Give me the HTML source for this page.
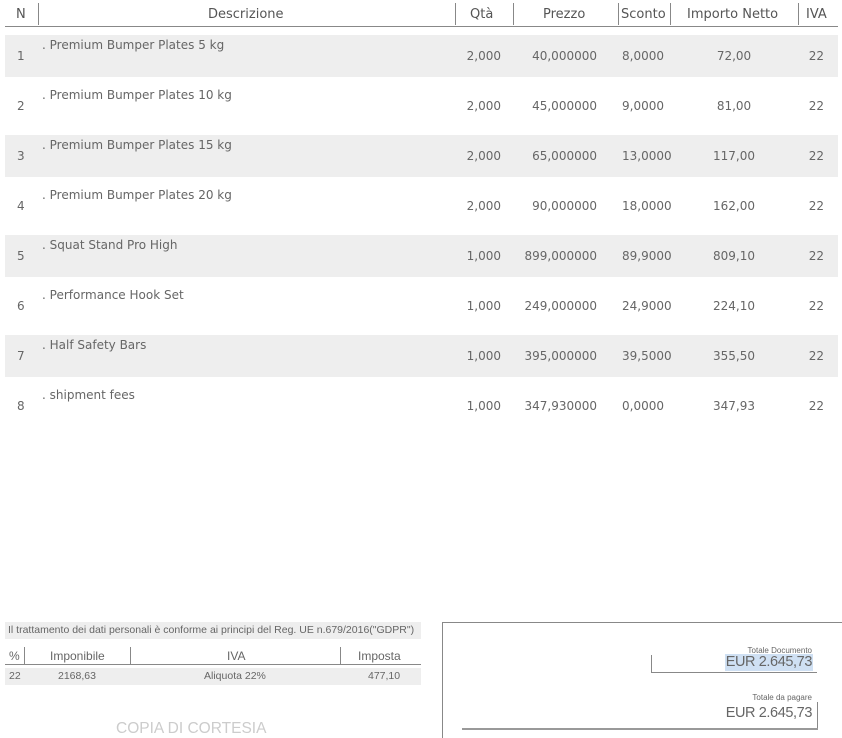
<!DOCTYPE html>
<html><head><meta charset="utf-8"><style>
body{margin:0;width:842px;height:738px;background:#fff;position:relative;overflow:hidden;font-family:"DejaVu Sans","Liberation Sans",sans-serif;color:#666;}
.a{position:absolute;white-space:nowrap}
.h{font-size:13px;top:7px;color:#555}
.v{position:absolute;width:1px;background:#888}
.row{position:absolute;left:5px;width:833px;height:42px}
.g{background:#eee}
.c{font-size:12px}
.cond{font-family:"Liberation Sans Narrow","Liberation Sans",sans-serif;}
</style></head><body>
<div class="a h" style="left:16px">N</div>
<div class="v" style="left:38px;top:3px;height:22px"></div>
<div class="a h" style="left:208px">Descrizione</div>
<div class="v" style="left:455px;top:3px;height:22px"></div>
<div class="a h" style="left:470px">Qtà</div>
<div class="v" style="left:513px;top:3px;height:22px"></div>
<div class="a h" style="left:543px">Prezzo</div>
<div class="v" style="left:618px;top:3px;height:22px"></div>
<div class="a h" style="left:621px">Sconto</div>
<div class="v" style="left:670px;top:3px;height:22px"></div>
<div class="a h" style="left:687px">Importo Netto</div>
<div class="v" style="left:798px;top:3px;height:22px"></div>
<div class="a h" style="left:806px">IVA</div>
<div style="position:absolute;left:5px;top:26px;width:833px;height:1px;background:#888"></div>

<div class="row g" style="top:35px"></div>
<div class="row g" style="top:135px"></div>
<div class="row g" style="top:235px"></div>
<div class="row g" style="top:335px"></div>

<div id="rows"></div>
<script>
var d=[["Premium Bumper Plates 5 kg","2,000","40,000000","8,0000","72,00"],
["Premium Bumper Plates 10 kg","2,000","45,000000","9,0000","81,00"],
["Premium Bumper Plates 15 kg","2,000","65,000000","13,0000","117,00"],
["Premium Bumper Plates 20 kg","2,000","90,000000","18,0000","162,00"],
["Squat Stand Pro High","1,000","899,000000","89,9000","809,10"],
["Performance Hook Set","1,000","249,000000","24,9000","224,10"],
["Half Safety Bars","1,000","395,000000","39,5000","355,50"],
["shipment fees","1,000","347,930000","0,0000","347,93"]];
var h="";
d.forEach(function(r,i){var t=35+50*i;
h+='<div class="a c" style="left:17px;top:'+(t+14)+'px">'+(i+1)+'</div>';
h+='<div class="a c" style="left:42px;top:'+(t+3)+'px">. '+r[0]+'</div>';
h+='<div class="a c" style="right:341px;top:'+(t+14)+'px">'+r[1]+'</div>';
h+='<div class="a c" style="right:245px;top:'+(t+14)+'px">'+r[2]+'</div>';
h+='<div class="a c" style="left:622px;top:'+(t+14)+'px">'+r[3]+'</div>';
h+='<div class="a c" style="left:684px;width:100px;text-align:center;top:'+(t+14)+'px">'+r[4]+'</div>';
h+='<div class="a c" style="right:18px;top:'+(t+14)+'px">22</div>';});
document.getElementById("rows").innerHTML=h;
</script>

<div style="position:absolute;left:5px;top:622px;width:416px;height:17px;background:#eee"></div>
<div class="a cond" style="left:8px;top:624px;font-size:10.5px">Il trattamento dei dati personali è conforme ai principi del Reg. UE n.679/2016("GDPR")</div>
<div class="a cond" style="left:9px;top:649px;font-size:12px">%</div>
<div class="v" style="left:24px;top:647px;height:17px"></div>
<div class="a cond" style="left:50px;top:649px;font-size:12px">Imponibile</div>
<div class="v" style="left:130px;top:647px;height:17px"></div>
<div class="a cond" style="left:227px;top:649px;font-size:12px">IVA</div>
<div class="v" style="left:340px;top:647px;height:17px"></div>
<div class="a cond" style="left:358px;top:649px;font-size:12px">Imposta</div>
<div style="position:absolute;left:5px;top:664px;width:416px;height:1px;background:#888"></div>
<div style="position:absolute;left:5px;top:668px;width:416px;height:17px;background:#eee"></div>
<div class="a cond" style="left:9px;top:670px;font-size:10.5px">22</div>
<div class="a cond" style="left:58px;top:670px;font-size:10.5px">2168,63</div>
<div class="a cond" style="left:204px;top:670px;font-size:10.5px">Aliquota 22%</div>
<div class="a cond" style="left:368px;top:670px;font-size:10.5px">477,10</div>
<div class="a cond" style="left:116px;top:720px;font-size:15.5px;color:#ccc">COPIA DI CORTESIA</div>

<div style="position:absolute;left:442px;top:622px;width:400px;height:1px;background:#888"></div>
<div style="position:absolute;left:442px;top:622px;width:1px;height:116px;background:#888"></div>
<div class="a cond" style="right:30px;top:646px;font-size:8px">Totale Documento</div>
<div class="a cond" style="right:29px;top:654px;font-size:14.5px;letter-spacing:-0.4px;background:#cfe0f3;padding:0 1px;line-height:17px">EUR 2.645,73</div>
<div style="position:absolute;left:651px;top:655px;width:1px;height:18px;background:#888"></div>
<div style="position:absolute;left:651px;top:672px;width:166px;height:1px;background:#888"></div>
<div class="a cond" style="right:30px;top:693px;font-size:8px">Totale da pagare</div>
<div class="a cond" style="right:30px;top:705px;font-size:14.5px;letter-spacing:-0.4px;line-height:17px">EUR 2.645,73</div>
<div style="position:absolute;left:817px;top:702px;width:1px;height:27px;background:#888"></div>
<div style="position:absolute;left:462px;top:728px;width:356px;height:2px;background:#999"></div>
</body></html>
